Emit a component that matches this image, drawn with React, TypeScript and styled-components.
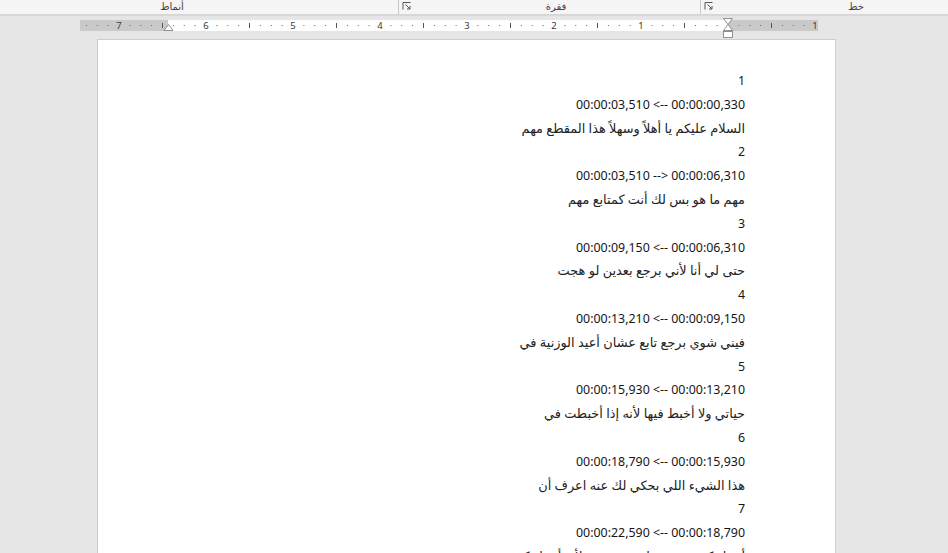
import React from "react";
import styled, { createGlobalStyle } from "styled-components";

const Global = createGlobalStyle`
  html, body { margin: 0; padding: 0; }
  body {
    background: #e6e6e6;
    font-family: "Noto Sans", "DejaVu Sans", sans-serif;
    overflow: hidden;
  }
`;

const Screen = styled.div`
  width: 948px;
  height: 553px;
  display: flex;
  flex-direction: column;
  overflow: hidden;
  background: #e6e6e6;
`;

const Ribbon = styled.div`
  height: 14px;
  flex: none;
  display: flex;
  background: #f5f5f5;
  border-bottom: 1px solid #d6d6d6;
  box-shadow: 0 1px 1px rgba(0, 0, 0, 0.06);
`;

const Group = styled.div<{ $w: number; $sep?: boolean; $padR?: number }>`
  width: ${(p) => p.$w}px;
  flex: none;
  display: flex;
  align-items: flex-start;
  box-sizing: border-box;
  padding-right: ${(p) => p.$padR ?? 0}px;
  border-left: ${(p) => (p.$sep ? "1px solid #c8c8c8" : "none")};
  height: 14px;
`;

const GroupLabel = styled.span<{ $padL?: number }>`
  flex: 1;
  text-align: center;
  font-size: 10px;
  line-height: 14px;
  margin-top: -1px;
  color: #444;
  direction: rtl;
  padding-left: ${(p) => p.$padL ?? 0}px;
`;

const LauncherBox = styled.span`
  width: 10px;
  height: 10px;
  margin: 1px 0 0 3px;
  flex: none;
  display: flex;
`;

const Launcher = () => (
  <LauncherBox>
    <svg width="10" height="10" viewBox="0 0 10 10">
      <path d="M1 8.5V1.5H8.5" fill="none" stroke="#555" strokeWidth="1" />
      <path d="M3.5 3.5L8 8M8 5V8H5" fill="none" stroke="#555" strokeWidth="1" />
    </svg>
  </LauncherBox>
);

const RulerRow = styled.div`
  margin-top: 5px;
  margin-left: 80px;
  width: 738px;
  height: 11px;
  flex: none;
  display: flex;
  position: relative;
`;

const RulerPart = styled.div<{ $w: number; $margin?: boolean }>`
  width: ${(p) => p.$w}px;
  height: 100%;
  background: ${(p) => (p.$margin ? "#c9c9c9" : "#ffffff")};
`;

const RulerMarks = styled.svg`
  position: absolute;
  left: 0;
  top: -2px;
  overflow: visible;
`;

const Ruler = () => {
  const origin = 648;
  const step = 87 / 8;
  const marks: React.ReactNode[] = [];
  for (let k = -8; k <= 59; k++) {
    const x = origin - k * step;
    if (x < 2 || x > 737) continue;
    if (k === 0) continue;
    if (k % 8 === 0) {
      marks.push(
        <text
          key={k}
          x={x}
          y={10.5}
          fontSize="9.5"
          textAnchor="middle"
          fill="#3a3a3a"
          fontFamily="'Noto Sans', sans-serif"
        >
          {Math.abs(k / 8)}
        </text>
      );
    } else if (k % 4 === 0) {
      marks.push(<rect key={k} x={x - 0.5} y={5} width={1} height={5} fill="#555" />);
    } else {
      marks.push(<rect key={k} x={x - 0.5} y={7} width={1} height={1} fill="#666" />);
    }
  }
  return (
    <RulerRow>
      <RulerPart $w={88} $margin />
      <RulerPart $w={560} />
      <RulerPart $w={90} $margin />
      <RulerMarks width="738" height="22" viewBox="0 0 738 22">
        {marks}
        <path d="M84 12.5L88.5 6.5L93 12.5Z" fill="#fff" stroke="#777" strokeWidth="0.8" />
        <path d="M643.5 0.5H652.5L648 6.5Z" fill="#fff" stroke="#777" strokeWidth="0.8" />
        <path d="M648 6.5L652.5 12.5H643.5Z" fill="#fff" stroke="#777" strokeWidth="0.8" />
        <rect x="643.5" y="13.5" width="9" height="6" fill="#fff" stroke="#777" strokeWidth="0.8" />
      </RulerMarks>
    </RulerRow>
  );
};

const Page = styled.div`
  margin-top: 9px;
  margin-left: 98px;
  width: 737px;
  flex: 1;
  background: #ffffff;
  box-shadow: 0 0 0 1px #cdcdcd;
  box-sizing: border-box;
  padding: 29px 90px 0 0;
  display: flex;
  flex-direction: column;
`;

const Para = styled.p<{ $ltr?: boolean; $ar?: boolean }>`
  margin: 0;
  direction: ${(p) => (p.$ltr ? "ltr" : "rtl")};
  text-align: right;
  font-size: ${(p) => (p.$ar ? "12.9px" : "12.4px")};
  line-height: 23.8px;
  height: 23.8px;
  color: ${(p) => (p.$ar ? "#222" : "#161616")};
  white-space: nowrap;
`;

const lines: { t: string; ltr?: boolean; ar?: boolean }[] = [
  { t: "1" },
  { t: "00:00:00,330 --> 00:00:03,510" },
  { t: "السلام عليكم يا أهلاً وسهلاً هذا المقطع مهم", ar: true },
  { t: "2" },
  { t: "00:00:03,510 --> 00:00:06,310", ltr: true },
  { t: "مهم ما هو بس لك أنت كمتابع مهم", ar: true },
  { t: "3" },
  { t: "00:00:06,310 --> 00:00:09,150" },
  { t: "حتى لي أنا لأني برجع بعدين لو هجت", ar: true },
  { t: "4" },
  { t: "00:00:09,150 --> 00:00:13,210" },
  { t: "فيني شوي برجع تابع عشان أعيد الوزنية في", ar: true },
  { t: "5" },
  { t: "00:00:13,210 --> 00:00:15,930" },
  { t: "حياتي ولا أخبط فيها لأنه إذا أخبطت في", ar: true },
  { t: "6" },
  { t: "00:00:15,930 --> 00:00:18,790" },
  { t: "هذا الشيء اللي بحكي لك عنه اعرف أن", ar: true },
  { t: "7" },
  { t: "00:00:18,790 --> 00:00:22,590" },
  { t: "أشياء كثيرة في حياتي رح تتغير لأنه أشياء كثيرة", ar: true },
];

export default function App() {
  return (
    <Screen>
      <Global />
      <Ribbon>
        <Group $w={398} $padR={54}>
          <GroupLabel>أنماط</GroupLabel>
        </Group>
        <Group $w={302} $sep>
          <Launcher />
          <GroupLabel>فقرة</GroupLabel>
        </Group>
        <Group $w={248} $sep>
          <Launcher />
          <GroupLabel $padL={50}>خط</GroupLabel>
        </Group>
      </Ribbon>
      <Ruler />
      <Page>
        {lines.map((l, i) => (
          <Para key={i} $ltr={l.ltr} $ar={l.ar}>
            {l.t}
          </Para>
        ))}
      </Page>
    </Screen>
  );
}
